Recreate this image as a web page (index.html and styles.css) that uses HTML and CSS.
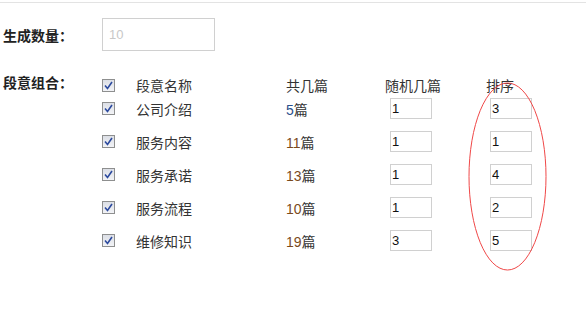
FILE: index.html
```html
<!DOCTYPE html>
<html lang="zh-CN">
<head>
    <meta charset="UTF-8">
    <title>段意组合</title>
    <link rel="stylesheet" href="styles.css">
</head>
<body>
    <div class="page">
        <div class="form-row">
            <label class="form-label">生成数量：</label>
            <input class="total-input" type="text" value="10">
        </div>
        <div class="form-row group-row">
            <label class="form-label">段意组合：</label>
            <div class="group">
                <div class="g-row g-head">
                    <span class="chk"><svg width="9" height="9" viewBox="0 0 9 9"><path d="M1 4.5 L3.5 7.5 L8 1" fill="none" stroke="#2c4a9e" stroke-width="1.6"/></svg></span>
                    <span class="g-name">段意名称</span>
                    <span class="g-count">共几篇</span>
                    <span class="g-rand">随机几篇</span>
                    <span class="g-sort">排序</span>
                </div>
                <div class="g-row">
                    <span class="chk"><svg width="9" height="9" viewBox="0 0 9 9"><path d="M1 4.5 L3.5 7.5 L8 1" fill="none" stroke="#2c4a9e" stroke-width="1.6"/></svg></span>
                    <span class="g-name">公司介绍</span>
                    <span class="g-count"><span class="num blue">5</span>篇</span>
                    <span class="g-rand"><input class="small-input" type="text" value="1"></span>
                    <span class="g-sort"><input class="small-input" type="text" value="3"></span>
                </div>
                <div class="g-row">
                    <span class="chk"><svg width="9" height="9" viewBox="0 0 9 9"><path d="M1 4.5 L3.5 7.5 L8 1" fill="none" stroke="#2c4a9e" stroke-width="1.6"/></svg></span>
                    <span class="g-name">服务内容</span>
                    <span class="g-count"><span class="num">11</span>篇</span>
                    <span class="g-rand"><input class="small-input" type="text" value="1"></span>
                    <span class="g-sort"><input class="small-input" type="text" value="1"></span>
                </div>
                <div class="g-row">
                    <span class="chk"><svg width="9" height="9" viewBox="0 0 9 9"><path d="M1 4.5 L3.5 7.5 L8 1" fill="none" stroke="#2c4a9e" stroke-width="1.6"/></svg></span>
                    <span class="g-name">服务承诺</span>
                    <span class="g-count"><span class="num">13</span>篇</span>
                    <span class="g-rand"><input class="small-input" type="text" value="1"></span>
                    <span class="g-sort"><input class="small-input" type="text" value="4"></span>
                </div>
                <div class="g-row">
                    <span class="chk"><svg width="9" height="9" viewBox="0 0 9 9"><path d="M1 4.5 L3.5 7.5 L8 1" fill="none" stroke="#2c4a9e" stroke-width="1.6"/></svg></span>
                    <span class="g-name">服务流程</span>
                    <span class="g-count"><span class="num">10</span>篇</span>
                    <span class="g-rand"><input class="small-input" type="text" value="1"></span>
                    <span class="g-sort"><input class="small-input" type="text" value="2"></span>
                </div>
                <div class="g-row">
                    <span class="chk"><svg width="9" height="9" viewBox="0 0 9 9"><path d="M1 4.5 L3.5 7.5 L8 1" fill="none" stroke="#2c4a9e" stroke-width="1.6"/></svg></span>
                    <span class="g-name">维修知识</span>
                    <span class="g-count"><span class="num">19</span>篇</span>
                    <span class="g-rand"><input class="small-input" type="text" value="3"></span>
                    <span class="g-sort"><input class="small-input" type="text" value="5"></span>
                </div>
            </div>
        </div>
        <!-- 红圈标注 -->
        <svg class="mark" width="79" height="189" viewBox="0 0 79 189">
            <ellipse cx="39.5" cy="94.5" rx="38.5" ry="93.5" fill="none" stroke="#f04848" stroke-width="1"/>
        </svg>
    </div>
</body>
</html>
```
FILE: styles.css
```css
* {
    margin: 0;
    padding: 0;
    box-sizing: border-box;
}
body {
    background: #fff;
    font-family: "Liberation Sans", "Noto Sans CJK SC", sans-serif;
    font-size: 14px;
    color: #333;
}
.page {
    position: relative;
    width: 586px;
    height: 324px;
    border-top: 1px solid #e3e3e3;
    margin-top: 2px;
}
.form-row {
    display: flex;
    align-items: center;
    padding-left: 3px;
    margin-top: 15px;
}
.form-label {
    width: 99px;
    font-weight: bold;
    font-size: 14px;
    color: #222;
}
.total-input {
    width: 113px;
    height: 33px;
    border: 1px solid #d0d0d0;
    padding-left: 6px;
    font-family: "Liberation Sans", sans-serif;
    font-size: 13px;
    color: #c8c8c8;
    outline: none;
}
.group-row {
    align-items: flex-start;
    margin-top: 24px;
}
.group-row .form-label {
    line-height: 17px;
}
.g-row {
    display: grid;
    grid-template-columns: 34px 150px 99px 101px 60px;
    align-items: center;
    height: 33px;
}
.g-row.g-head {
    height: 17px;
}
.chk {
    width: 13px;
    height: 13px;
    border: 1px solid #8e8f8f;
    background: linear-gradient(#dcdfe6, #f2f3f6);
    display: flex;
    align-items: center;
    justify-content: center;
}
.num {
    color: #7a4a1c;
}
.num.blue {
    color: #2a4f8c;
}
.g-rand {
    padding-left: 5px;
}
.g-sort {
    padding-left: 4px;
}
.g-head .g-rand,
.g-head .g-sort {
    padding-left: 0;
}
.small-input {
    display: block;
    width: 42px;
    height: 21px;
    border: 1px solid #d0d0d0;
    padding-left: 1px;
    font-family: "Liberation Sans", sans-serif;
    font-size: 13px;
    color: #111;
    outline: none;
}
.mark {
    position: absolute;
    left: 468px;
    top: 79px;
}
```
